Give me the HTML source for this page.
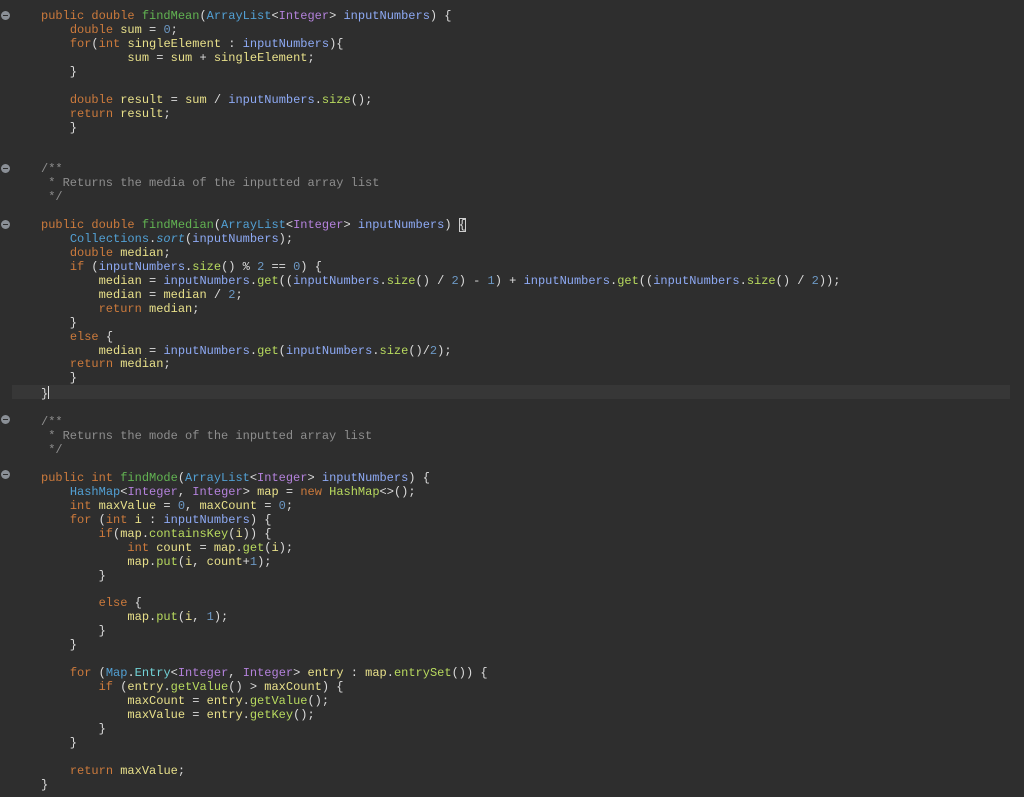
<!DOCTYPE html>
<html><head><meta charset="utf-8"><style>
html,body{margin:0;padding:0;background:#2e2e2e;width:1024px;height:797px;overflow:hidden}
pre{margin:0;position:absolute;left:41px;top:10px;font:12px/13.93px "Liberation Mono",monospace;color:#dcdcdc}
.k{color:#cc7a3c}.v{color:#e8e08a}.p{color:#8eaaf5}.m{color:#b8da5e}.d{color:#62b352}.t{color:#52a0d4}.g{color:#b482dc}.n{color:#6c98c4}.c{color:#8e8e8e}.e{color:#72d4d8}.s{color:#52a0d4;font-style:italic}
.hl{position:absolute;left:12px;top:385px;width:998px;height:14px;background:#373737}
.dot{position:absolute;left:1px;width:9px;height:9px;border-radius:50%;background:#8a8f96}
.dot:after{content:"";position:absolute;left:2px;top:4px;width:5px;height:1px;background:#2e2e2e}
.box{outline:1px solid #cfcfcf;outline-offset:-1px}
.cur{display:inline-block;width:1px;height:13px;background:#ddd;vertical-align:-2px}
</style></head><body>
<div class="hl"></div>
<div class="dot" style="top:11px"></div>
<div class="dot" style="top:164px"></div>
<div class="dot" style="top:220px"></div>
<div class="dot" style="top:415px"></div>
<div class="dot" style="top:470px"></div>
<pre><span class="k">public double</span> <span class="d">findMean</span>(<span class="t">ArrayList</span>&lt;<span class="g">Integer</span>&gt; <span class="p">inputNumbers</span>) {
    <span class="k">double</span> <span class="v">sum</span> = <span class="n">0</span>;
    <span class="k">for</span>(<span class="k">int</span> <span class="v">singleElement</span> : <span class="p">inputNumbers</span>){
            <span class="v">sum</span> = <span class="v">sum</span> + <span class="v">singleElement</span>;
    }

    <span class="k">double</span> <span class="v">result</span> = <span class="v">sum</span> / <span class="p">inputNumbers</span>.<span class="m">size</span>();
    <span class="k">return</span> <span class="v">result</span>;
    }


<span class="c">/**
 * Returns the media of the inputted array list
 */</span>

<span class="k">public double</span> <span class="d">findMedian</span>(<span class="t">ArrayList</span>&lt;<span class="g">Integer</span>&gt; <span class="p">inputNumbers</span>) <span class="box">{</span>
    <span class="t">Collections</span>.<span class="s">sort</span>(<span class="p">inputNumbers</span>);
    <span class="k">double</span> <span class="v">median</span>;
    <span class="k">if</span> (<span class="p">inputNumbers</span>.<span class="m">size</span>() % <span class="n">2</span> == <span class="n">0</span>) {
        <span class="v">median</span> = <span class="p">inputNumbers</span>.<span class="m">get</span>((<span class="p">inputNumbers</span>.<span class="m">size</span>() / <span class="n">2</span>) - <span class="n">1</span>) + <span class="p">inputNumbers</span>.<span class="m">get</span>((<span class="p">inputNumbers</span>.<span class="m">size</span>() / <span class="n">2</span>));
        <span class="v">median</span> = <span class="v">median</span> / <span class="n">2</span>;
        <span class="k">return</span> <span class="v">median</span>;
    }
    <span class="k">else</span> {
        <span class="v">median</span> = <span class="p">inputNumbers</span>.<span class="m">get</span>(<span class="p">inputNumbers</span>.<span class="m">size</span>()/<span class="n">2</span>);
    <span class="k">return</span> <span class="v">median</span>;
    }
}<span class="cur"></span>

<span class="c">/**
 * Returns the mode of the inputted array list
 */</span>

<span class="k">public int</span> <span class="d">findMode</span>(<span class="t">ArrayList</span>&lt;<span class="g">Integer</span>&gt; <span class="p">inputNumbers</span>) {
    <span class="t">HashMap</span>&lt;<span class="g">Integer</span>, <span class="g">Integer</span>&gt; <span class="v">map</span> = <span class="k">new</span> <span class="m">HashMap</span>&lt;&gt;();
    <span class="k">int</span> <span class="v">maxValue</span> = <span class="n">0</span>, <span class="v">maxCount</span> = <span class="n">0</span>;
    <span class="k">for</span> (<span class="k">int</span> <span class="v">i</span> : <span class="p">inputNumbers</span>) {
        <span class="k">if</span>(<span class="v">map</span>.<span class="m">containsKey</span>(<span class="v">i</span>)) {
            <span class="k">int</span> <span class="v">count</span> = <span class="v">map</span>.<span class="m">get</span>(<span class="v">i</span>);
            <span class="v">map</span>.<span class="m">put</span>(<span class="v">i</span>, <span class="v">count</span>+<span class="n">1</span>);
        }

        <span class="k">else</span> {
            <span class="v">map</span>.<span class="m">put</span>(<span class="v">i</span>, <span class="n">1</span>);
        }
    }

    <span class="k">for</span> (<span class="t">Map</span>.<span class="e">Entry</span>&lt;<span class="g">Integer</span>, <span class="g">Integer</span>&gt; <span class="v">entry</span> : <span class="v">map</span>.<span class="m">entrySet</span>()) {
        <span class="k">if</span> (<span class="v">entry</span>.<span class="m">getValue</span>() &gt; <span class="v">maxCount</span>) {
            <span class="v">maxCount</span> = <span class="v">entry</span>.<span class="m">getValue</span>();
            <span class="v">maxValue</span> = <span class="v">entry</span>.<span class="m">getKey</span>();
        }
    }

    <span class="k">return</span> <span class="v">maxValue</span>;
}</pre>
</body></html>
